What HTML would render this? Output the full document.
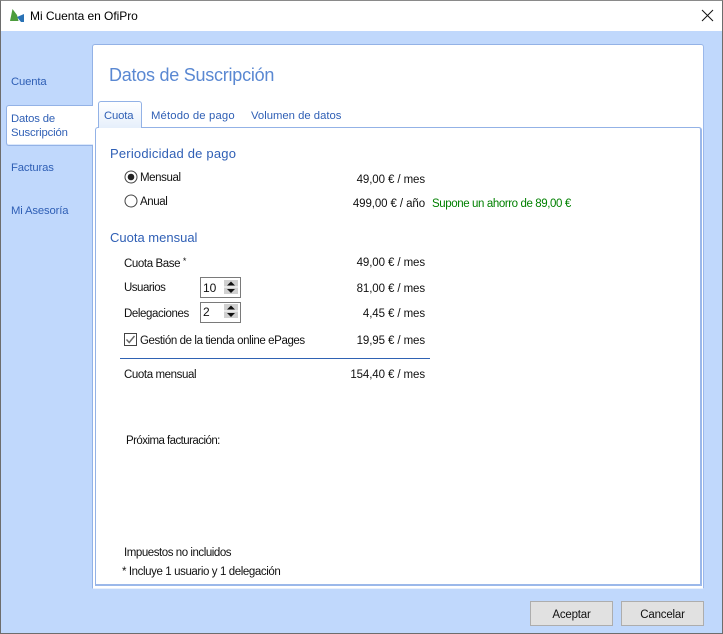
<!DOCTYPE html>
<html lang="es"><head><meta charset="utf-8"><title>Mi Cuenta en OfiPro</title>
<style>
html,body{margin:0;padding:0;width:723px;height:634px;overflow:hidden;background:#c0d8fc}
body{position:relative;font-family:"Liberation Sans",sans-serif;font-size:11.5px;color:#111}
div,span{position:absolute;box-sizing:border-box}
.t{white-space:nowrap;line-height:14px;letter-spacing:-.4px}
.b{color:#2f5fb5;font-size:11.3px;letter-spacing:-.15px}
.r{text-align:right;width:100px;letter-spacing:-.1px}
.spin{width:41px;height:21px;border:1px solid #7a7a7a;background:#fff}
.btn{background:#e1e1e1;border:1px solid #adadad;height:25px;text-align:center;line-height:26px;font-size:11.5px;letter-spacing:-.2px}
</style></head><body>
<div style="left:0;top:0;width:723px;height:634px;border:1px solid #6d6d6d;border-top-color:#8a8a8a"></div>
<div style="left:1px;top:1px;width:721px;height:30px;background:#fff"></div>
<svg style="position:absolute;left:9px;top:8px" width="16" height="16" viewBox="0 0 16 16"><path d="M1 13L3.5 1L8 7L9.5 13Z" fill="#4c9c3c"/><path d="M8 9L15 6V14H12Z" fill="#2a72b5"/></svg>
<div class="t" style="left:30px;top:9px;font-size:12px;color:#000;letter-spacing:-.05px">Mi Cuenta en OfiPro</div>
<svg style="position:absolute;left:701px;top:9px" width="13" height="13" viewBox="0 0 13 13"><path d="M1 1L12 12M12 1L1 12" stroke="#111" stroke-width="1" fill="none"/></svg>

<div style="left:92px;top:44px;width:612px;height:545px;background:#fff;border:1px solid #93b2e6;border-right-color:#9bb8ea;border-bottom-color:#e8f0fd;border-radius:3px 3px 0 0"></div>
<div style="left:6px;top:105px;width:87px;height:41px;background:#fff;border:1px solid #93b2e6;border-right:0;border-radius:3px 0 0 3px;box-shadow:inset 0 -1px #dbe8fb"></div>
<div class="t b" style="left:11px;top:75px">Cuenta</div>
<div class="t b" style="left:11px;top:112px">Datos de</div>
<div class="t b" style="left:11px;top:126px">Suscripción</div>
<div class="t b" style="left:11px;top:161px">Facturas</div>
<div class="t b" style="left:11px;top:204px">Mi Asesoría</div>

<div class="t" style="left:109px;top:64px;font-size:18px;line-height:22px;color:#5a88d2;letter-spacing:-.25px">Datos de Suscripción</div>

<div style="left:95px;top:127px;width:607px;height:459px;background:#fff;border:1px solid #93b2e6;border-right:2px solid #9bb8ea;border-bottom:2px solid #9bb8ea;border-radius:3px 3px 0 0"></div>
<div style="left:98px;top:101px;width:44px;height:27px;background:linear-gradient(#fff,#e6effb);border:1px solid #93b2e6;border-bottom:0;border-radius:3px 3px 0 0"></div>
<div class="t b" style="left:104px;top:109px">Cuota</div>
<div class="t b" style="left:151px;top:109px;letter-spacing:.15px">Método de pago</div>
<div class="t b" style="left:251px;top:109px;letter-spacing:0">Volumen de datos</div>

<div class="t b" style="left:110px;top:147px;font-size:13px;letter-spacing:.2px">Periodicidad de pago</div>
<svg style="position:absolute;left:124px;top:170px" width="14" height="14"><circle cx="7" cy="7" r="6" fill="#fff" stroke="#444"/><circle cx="7" cy="7" r="3.3" fill="#222"/></svg>
<div class="t" style="left:140px;top:171px">Mensual</div>
<div class="t r" style="left:325px;top:173px">49,00 € / mes</div>
<svg style="position:absolute;left:124px;top:194px" width="14" height="14"><circle cx="7" cy="7" r="6" fill="#fff" stroke="#444"/></svg>
<div class="t" style="left:140px;top:195px">Anual</div>
<div class="t r" style="left:325px;top:197px">499,00 € / año</div>
<div class="t" style="left:432px;top:197px;color:#008000">Supone un ahorro de 89,00 €</div>

<div class="t b" style="left:110px;top:231px;font-size:13px;letter-spacing:0">Cuota mensual</div>
<div class="t" style="left:124px;top:254px">Cuota Base <span style="position:static;font-size:9px;vertical-align:3px">*</span></div>
<div class="t r" style="left:325px;top:256px">49,00 € / mes</div>
<div class="t" style="left:124px;top:281px;letter-spacing:-.5px">Usuarios</div>
<div class="spin" style="left:200px;top:277px"></div>
<div class="t" style="left:203px;top:281px;font-size:12px;letter-spacing:0">10</div>
<svg style="position:absolute;left:224px;top:280px" width="15" height="15"><rect width="14" height="6.5" fill="#d0d0d0"/><rect y="7.5" width="14" height="6.5" fill="#d0d0d0"/><path d="M3 5.5L7 1.5L11 5.5Z M3 9L11 9L7 13Z" fill="#111"/></svg>
<div class="t r" style="left:325px;top:282px">81,00 € / mes</div>
<div class="t" style="left:124px;top:307px">Delegaciones</div>
<div class="spin" style="left:200px;top:302px"></div>
<div class="t" style="left:203px;top:305px;font-size:12px;letter-spacing:0">2</div>
<svg style="position:absolute;left:224px;top:304px" width="15" height="15"><rect width="14" height="6.5" fill="#d0d0d0"/><rect y="7.5" width="14" height="6.5" fill="#d0d0d0"/><path d="M3 5.5L7 1.5L11 5.5Z M3 9L11 9L7 13Z" fill="#111"/></svg>
<div class="t r" style="left:325px;top:307px">4,45 € / mes</div>
<svg style="position:absolute;left:124px;top:333px" width="13" height="13"><rect x=".5" y=".5" width="12" height="12" fill="#fff" stroke="#444"/><path d="M2.5 6.5L5.2 9.5L10.5 3" fill="none" stroke="#666" stroke-width="1.4"/></svg>
<div class="t" style="left:140px;top:334px">Gestión de la tienda online ePages</div>
<div class="t r" style="left:325px;top:334px">19,95 € / mes</div>
<div style="left:120px;top:358px;width:310px;height:1px;background:#2f62b3"></div>
<div class="t" style="left:124px;top:368px">Cuota mensual</div>
<div class="t r" style="left:325px;top:368px">154,40 € / mes</div>
<div class="t" style="left:126px;top:434px;letter-spacing:-.55px">Próxima facturación:</div>
<div class="t" style="left:124px;top:546px;letter-spacing:-.45px">Impuestos no incluidos</div>
<div class="t" style="left:122px;top:565px">* Incluye 1 usuario y 1 delegación</div>

<div class="btn" style="left:530px;top:601px;width:83px">Aceptar</div>
<div class="btn" style="left:621px;top:601px;width:83px">Cancelar</div>
</body></html>
